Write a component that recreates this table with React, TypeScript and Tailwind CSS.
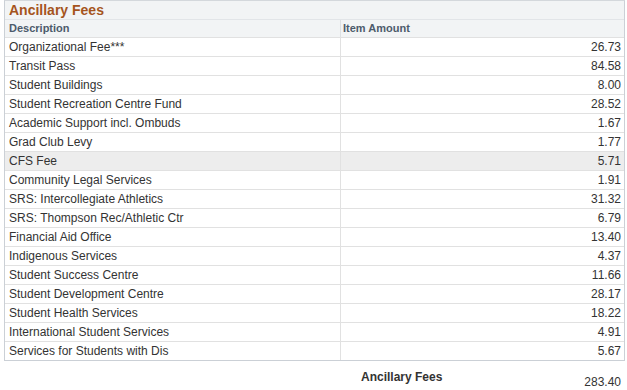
import React from 'react';

type Fee = { desc: string; amount: string };

const fees: Fee[] = [
  { desc: 'Organizational Fee***', amount: '26.73' },
  { desc: 'Transit Pass', amount: '84.58' },
  { desc: 'Student Buildings', amount: '8.00' },
  { desc: 'Student Recreation Centre Fund', amount: '28.52' },
  { desc: 'Academic Support incl. Ombuds', amount: '1.67' },
  { desc: 'Grad Club Levy', amount: '1.77' },
  { desc: 'CFS Fee', amount: '5.71' },
  { desc: 'Community Legal Services', amount: '1.91' },
  { desc: 'SRS: Intercollegiate Athletics', amount: '31.32' },
  { desc: 'SRS: Thompson Rec/Athletic Ctr', amount: '6.79' },
  { desc: 'Financial Aid Office', amount: '13.40' },
  { desc: 'Indigenous Services', amount: '4.37' },
  { desc: 'Student Success Centre', amount: '11.66' },
  { desc: 'Student Development Centre', amount: '28.17' },
  { desc: 'Student Health Services', amount: '18.22' },
  { desc: 'International Student Services', amount: '4.91' },
  { desc: 'Services for Students with Dis', amount: '5.67' },
];

const App: React.FC = () => {
  return (
    <div className="w-[627px] h-[390px] bg-white font-['Liberation_Sans',Arial,sans-serif] text-[12px] text-[#333]">
      <div className="ml-[4px] mr-[2px] border border-[#cbd0d6] border-t-[#d4d8dc]">
        <div className="h-[18px] bg-[#f2f4f5] px-[4px] text-[14px] font-bold leading-[18px] text-[#a5541d]">
          Ancillary Fees
        </div>
        <div className="flex h-[18px] border-t border-[#e2e5e8] bg-[#f2f4f5] text-[11px] font-bold leading-[17px] text-[#4d5b6b]">
          <div className="w-[336px] shrink-0 border-r border-[#dde0e3] px-[4px]">Description</div>
          <div className="flex-1 px-[2px]">Item Amount</div>
        </div>
        {fees.map((f) => (
          <div
            key={f.desc}
            className={`flex h-[19px] border-t border-[#e1e1e1] leading-[18px] ${f.desc === 'CFS Fee' ? 'bg-[#ededed]' : 'bg-white'}`}
          >
            <div className="w-[336px] shrink-0 border-r border-[#e1e1e1] px-[4px]">{f.desc}</div>
            <div className="flex-1 px-[3px] text-right">{f.amount}</div>
          </div>
        ))}
      </div>
      <div className="flex mt-[9px]">
        <div className="ml-[361px] text-[12px] font-bold leading-[14px] text-[#333]">Ancillary Fees</div>
        <div className="ml-auto mr-[6px] mt-[5px] leading-[14px]">283.40</div>
      </div>
    </div>
  );
};

export default App;
